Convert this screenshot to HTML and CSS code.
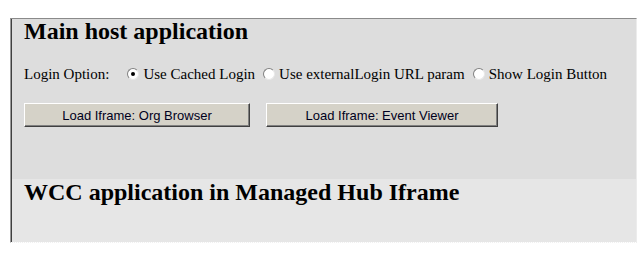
FILE: index.html
```html
<!DOCTYPE html>
<html lang="en">
<head>
  <meta charset="UTF-8">
  <title>Main host application</title>
  <link rel="stylesheet" href="styles.css">
</head>
<body>
  <div class="frame">
    <div class="host">
      <h2>Main host application</h2>

      <div class="login-row">
        <span class="label">Login Option:</span>
        <label class="opt"><span class="radio checked"></span>Use Cached Login</label>
        <label class="opt"><span class="radio"></span>Use externalLogin URL param</label>
        <label class="opt"><span class="radio"></span>Show Login Button</label>
      </div>

      <div class="btn-row">
        <button class="btn btn-org">Load Iframe: Org Browser</button>
        <button class="btn btn-event">Load Iframe: Event Viewer</button>
      </div>
    </div>

    <div class="hub">
      <h2>WCC application in Managed Hub Iframe</h2>
    </div>
  </div>
</body>
</html>
```

FILE: styles.css
```css
body {
  margin: 0;
  font-family: "Liberation Serif", "Times New Roman", serif;
  background: #fff;
}
.frame {
  margin: 18px 0 0 10px;
  width: 625px;
  border-top: 1px solid #8a8a8a;
  border-left: 1px solid #9a9a9a;
  border-right: 1px solid #ececec;
  border-bottom: 1px dotted #f0f0f0;
}
h2 {
  margin: 0;
  font-size: 24px;
  line-height: 24px;
  font-weight: bold;
  color: #000;
}
.host, .hub {
  box-shadow: inset 1px 0 0 #404040;
}
.host {
  background: #dddddd;
  padding: 0 12px 0 13px;
  height: 160px;
}
.hub {
  background: #e6e6e6;
  padding: 1px 12px 0 13px;
  height: 62px;
}
.login-row {
  display: flex;
  align-items: center;
  margin-top: 21px;
  height: 20px;
  font-size: 15px;
  color: #000;
}
.label {
  margin-right: 18px;
}
.opt {
  display: flex;
  align-items: center;
  margin-right: 8px;
  white-space: nowrap;
}
.radio {
  width: 10px;
  height: 10px;
  border-radius: 50%;
  border: 1px solid;
  border-color: #808080 #e8e8e8 #e8e8e8 #808080;
  background: #fff;
  margin-right: 4px;
  position: relative;
}
.radio.checked::after {
  content: "";
  position: absolute;
  left: 3px;
  top: 3px;
  width: 4px;
  height: 4px;
  border-radius: 50%;
  background: #000;
}
.btn-row {
  display: flex;
  gap: 16px;
  margin-top: 19px;
}
.btn {
  height: 24px;
  padding: 0;
  font-family: "Liberation Sans", Arial, sans-serif;
  font-size: 13px;
  color: #000020;
  background: #d5d2c8;
  border: 1px solid;
  border-color: #fff #404040 #404040 #fff;
  box-shadow: inset -1px -1px 0 #808080;
}
.btn-org {
  width: 226px;
}
.btn-event {
  width: 232px;
}
```
